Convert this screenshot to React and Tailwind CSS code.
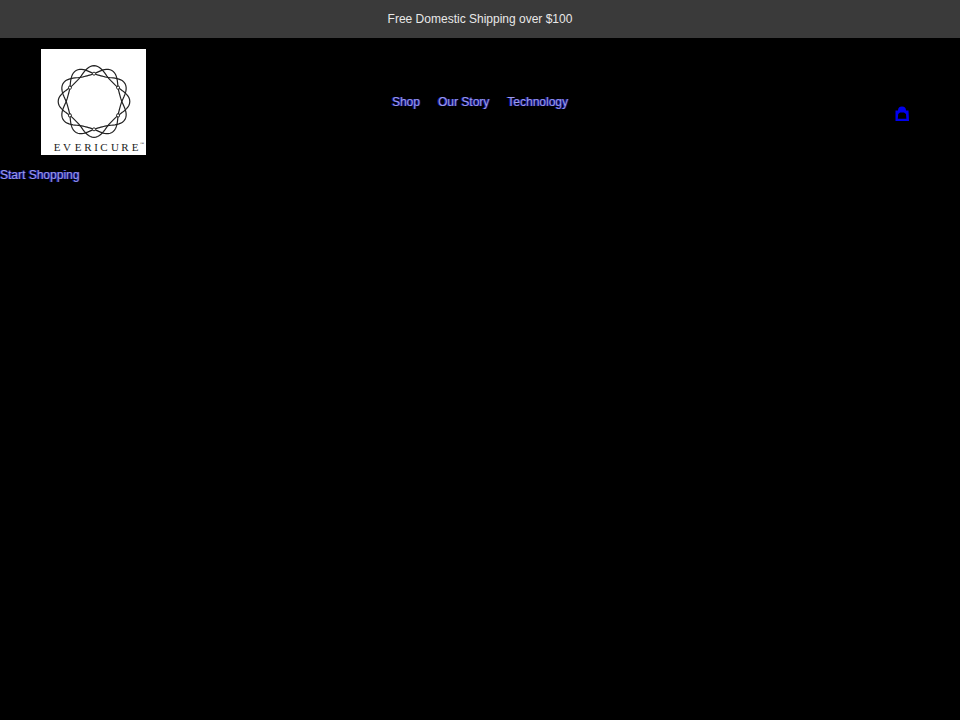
const links = ['Shop', 'Our Story', 'Technology'];

// one closed strand of the rosette, four lobes, turned by `shift` degrees
function strand(shift) {
  const points = [];
  for (let deg = 0; deg < 360; deg += 3) {
    const t = (4 * (deg - shift) * Math.PI) / 180;
    const r = 30.5 + 4.6 * Math.cos(t) + 0.7 * Math.cos(2 * t);
    const a = (deg * Math.PI) / 180;
    points.push(`${(53 + r * Math.sin(a)).toFixed(2)} ${(52.5 - r * Math.cos(a)).toFixed(2)}`);
  }
  return `M${points.join('L')}Z`;
}

function Logo() {
  return (
    <svg viewBox="0 0 105 106" className="block w-[105px] h-[106px] bg-white" role="img" aria-label="Evericure">
      <g fill="none" stroke="#222" strokeWidth="1.2">
        {[0, 30, 60].map((shift) => (
          <path key={shift} d={strand(shift)} />
        ))}
      </g>
      <g fill="#fff" stroke="#222" strokeWidth="0.9">
        {[0, 60, 120, 180, 240, 300].map((deg) => (
          <circle key={deg} cx="53" cy="24.7" r="1.5" transform={`rotate(${deg} 53 52.5)`} />
        ))}
      </g>
      <g fill="#222" fontFamily="'Liberation Serif', serif">
        {[...'EVERICURE'].map((letter, i) => (
          <text key={i} x={[16, 26, 37, 47, 55, 63, 74, 84, 94][i]} y="102" fontSize="11" textAnchor="middle">
            {letter}
          </text>
        ))}
        <text x="99" y="96" fontSize="4">™</text>
      </g>
    </svg>
  );
}

const linkClass = 'text-[#9c9ce6] [text-shadow:1px_0_#1c1c9c,-1px_0_#1c1c9c]';

function App() {
  return (
    <div className="min-h-screen bg-black font-['Liberation_Sans',Arial,sans-serif] text-xs">
      <div className="bg-[#3a3a3a] h-[38px] flex items-center justify-center">
        <p className="text-[#e8e8e8] text-xs">Free Domestic Shipping over $100</p>
      </div>

      <header className="grid grid-cols-[1fr_auto_1fr] px-10 pt-[11px] pb-3">
        <a href="#home" className="justify-self-start ml-px">
          <Logo />
        </a>
        <nav className="pt-[45px]">
          <ul className="flex gap-[18px]">
            {links.map((link) => (
              <li key={link}>
                <a href="#nav" className={linkClass}>{link}</a>
              </li>
            ))}
          </ul>
        </nav>
        <a href="#cart" aria-label="Cart" className="justify-self-end self-center mr-[10px] mt-6">
          <svg viewBox="0 0 16 16" className="block size-4" fill="#0000ee" fillRule="evenodd">
            <path d="M1.5 15V4.500H4a4 4 0 0 1 8 0h2.500L15 15H1zM3.800 12.800h8.600L12 8l-2-1.500H6L4.200 8z" />
          </svg>
        </a>
      </header>

      <main>
        <a href="#shop" className={linkClass}>Start Shopping</a>
      </main>
    </div>
  );
}

export default App;
